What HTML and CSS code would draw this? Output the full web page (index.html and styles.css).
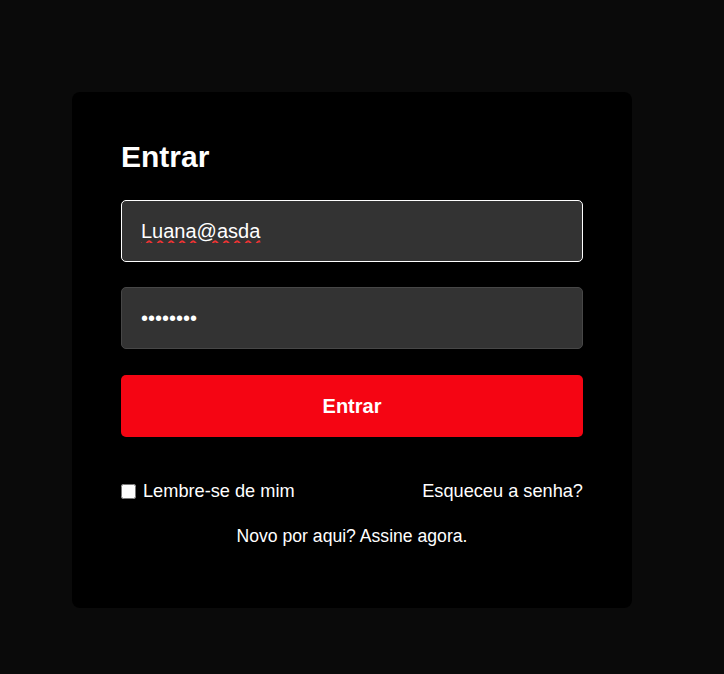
FILE: index.html
```html
<!DOCTYPE html>
<html lang="pt-BR">
<head>
<meta charset="utf-8">
<title>Entrar</title>
<link rel="stylesheet" href="styles.css">
</head>
<body>
<main class="card">
  <h1 class="title">Entrar</h1>
  <form class="form">
    <input class="field field-focus" type="email" value="Luana@asda">
    <input class="field" type="password" value="12345678">
    <button class="submit" type="button">Entrar</button>
    <div class="options">
      <label class="remember"><input class="check" type="checkbox"><span>Lembre-se de mim</span></label>
      <a class="link" href="#">Esqueceu a senha?</a>
    </div>
    <p class="signup">Novo por aqui? <a class="link" href="#">Assine agora.</a></p>
  </form>
</main>
</body>
</html>
```
FILE: styles.css
```css
html, body {
  margin: 0;
  padding: 0;
  background: #0a0a0a;
  font-family: "Liberation Sans", Arial, sans-serif;
  color: #fff;
}

.card {
  box-sizing: border-box;
  width: 560px;
  height: 516px;
  margin: 92px 0 0 72px;
  padding: 48px 49px 0 49px;
  background: #000;
  border-radius: 8px;
}

.title {
  margin: 0 0 26px 0;
  font-size: 30px;
  line-height: 34px;
  font-weight: 700;
}

.form {
  display: flex;
  flex-direction: column;
}

.field {
  box-sizing: border-box;
  height: 62px;
  width: 100%;
  margin: 0 0 25px 0;
  padding: 0 19px;
  background: #333;
  border: 1px solid #474747;
  border-radius: 5px;
  color: #fff;
  font-family: "Liberation Sans", Arial, sans-serif;
  font-size: 20px;
  outline: none;
}

.field-focus {
  border-color: #fff;
  text-decoration: underline wavy #e33;
  text-underline-offset: 2px;
}

.field + .submit {
  margin-top: 1px;
}

.submit {
  box-sizing: border-box;
  height: 62px;
  width: 100%;
  border: none;
  border-radius: 5px;
  background: #f50513;
  color: #fff;
  font-family: "Liberation Sans", Arial, sans-serif;
  font-size: 20px;
  font-weight: 700;
  cursor: pointer;
}

.options {
  display: flex;
  justify-content: space-between;
  align-items: center;
  margin-top: 44px;
  font-size: 18.2px;
  line-height: 20px;
}

.remember {
  display: flex;
  align-items: center;
}

.check {
  width: 15px;
  height: 15px;
  margin: 0 7px 0 0;
}

.link {
  color: #fff;
  text-decoration: none;
}

.signup {
  margin: 25px 0 0 0;
  text-align: center;
  font-size: 17.6px;
  line-height: 20px;
}
```
